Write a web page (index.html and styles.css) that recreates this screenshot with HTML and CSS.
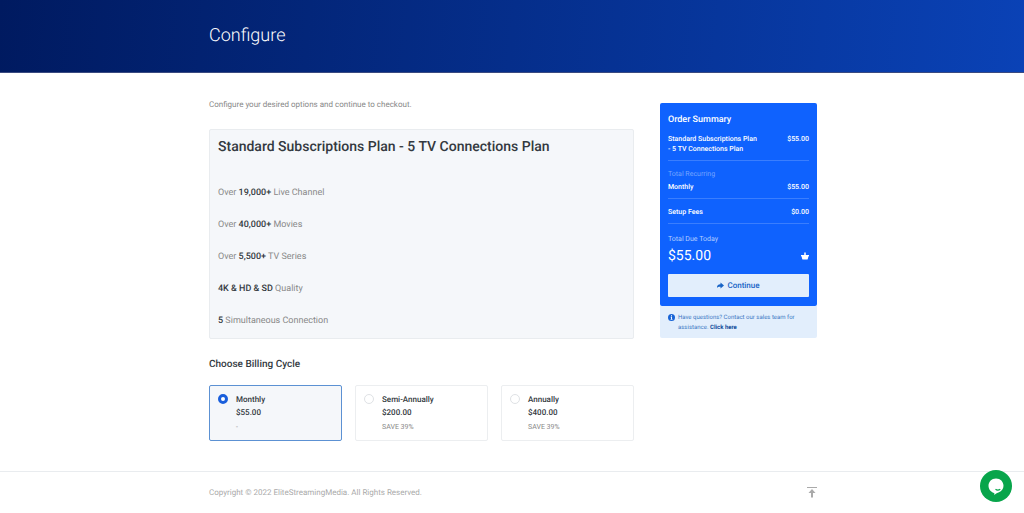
FILE: index.html
```html
<!DOCTYPE html>
<html lang="en">
<head>
<meta charset="utf-8">
<meta name="viewport" content="width=device-width, initial-scale=1">
<title>Configure</title>
<link rel="stylesheet" href="styles.css">
</head>
<body>
<header class="banner">
  <div class="container"><h1 class="banner-title">Configure</h1></div>
</header>
<main class="container layout">
  <form class="config" id="config">
    <p class="intro">Configure your desired options and continue to checkout.</p>
    <section class="product">
      <h2 class="product-title">Standard Subscriptions Plan - 5 TV Connections Plan</h2>
      <ul class="features">
        <li>Over <strong>19,000+</strong> Live Channel</li>
        <li>Over <strong>40,000+</strong> Movies</li>
        <li>Over <strong>5,500+</strong> TV Series</li>
        <li><strong>4K &amp; HD &amp; SD</strong> Quality</li>
        <li><strong>5</strong> Simultaneous Connection</li>
      </ul>
    </section>
    <h3 class="cycle-title">Choose Billing Cycle</h3>
    <div class="cycles">
      <label class="cycle">
        <input class="radio" type="radio" name="cycle" checked>
        <span class="cycle-text"><span>Monthly</span><span>$55.00</span><small class="save">-</small></span>
      </label>
      <label class="cycle">
        <input class="radio" type="radio" name="cycle">
        <span class="cycle-text"><span>Semi-Annually</span><span>$200.00</span><small class="save">SAVE 39%</small></span>
      </label>
      <label class="cycle">
        <input class="radio" type="radio" name="cycle">
        <span class="cycle-text"><span>Annually</span><span>$400.00</span><small class="save">SAVE 39%</small></span>
      </label>
    </div>
  </form>
  <aside class="sidebar">
    <section class="summary">
      <h2 class="summary-title">Order Summary</h2>
      <div class="row"><span class="row-name">Standard Subscriptions Plan - 5 TV Connections Plan</span><span>$55.00</span></div>
      <div class="group">
        <p class="muted">Total Recurring</p>
        <div class="row"><span>Monthly</span><span>$55.00</span></div>
      </div>
      <div class="group">
        <div class="row"><span>Setup Fees</span><span>$0.00</span></div>
      </div>
      <div class="group due">
        <p class="due-label">Total Due Today</p>
        <div class="total"><span>$55.00</span>
          <svg class="basket" viewBox="0 0 16 16" aria-hidden="true"><path d="M6.500 1h3v5H16v2.500h-1L13.500 14q-.3 1-1.300 1H3.800q-1 0-1.300-1L1 8.500H0V6h6.500z"/></svg>
        </div>
        <button class="continue" type="submit" form="config">
          <svg class="arrow" viewBox="0 0 16 16" aria-hidden="true"><path d="M8 1l8 7-8 7v-4H5Q2 11 0 13.500C0 8 2 5 8 5z"/></svg>
          Continue
        </button>
      </div>
    </section>
    <div class="help">
      <svg class="info" viewBox="0 0 16 16" aria-hidden="true"><circle cx="8" cy="8" r="8" fill="#1763d6"/><path d="M6.900 3h2.300v2.200H6.900zM6 6.500h3.200v4.700h1V13H6v-1.800h1V8.200H6z" fill="#fff"/></svg>
      <p>Have questions? Contact our sales team for assistance. <a class="help-link" href="#">Click here</a></p>
    </div>
  </aside>
</main>
<footer class="footer">
  <div class="container footer-inner">
    <p>Copyright © 2022 EliteStreamingMedia. All Rights Reserved.</p>
    <a class="top-link" href="#" aria-label="Back to top"><svg viewBox="0 0 10 11" width="10" height="11" aria-hidden="true"><path d="M0 0h10v1H0zM5 2L8.500 6H6v4.500H4V6H1.500z" fill="#aaa"/></svg></a>
  </div>
</footer>
<button class="chat" type="button" aria-label="Open chat">
  <svg viewBox="0 0 32 32" width="32" height="32" aria-hidden="true"><path d="M16 8.500c4.400 0 7.500 3.200 7.500 7.300 0 3.300-2 5.500-4.500 6.500-1.700.7-3 1.300-4.700 2.700v-1.900C11 22.300 8.500 19.500 8.500 15.800c0-4.100 3.100-7.300 7.500-7.300z" fill="#fff"/><path d="M15.500 19.200q2.200 1.700 4.800 0" fill="none" stroke="#08a54b" stroke-width="1.200"/></svg>
</button>
</body>
</html>
```
FILE: styles.css
```css
* { box-sizing: border-box; }
body {
  margin: 0;
  font: 8px/10px Roboto, "Liberation Sans", sans-serif;
  text-rendering: geometricPrecision;
  color: #888;
  background: #fff;
}
h1, h2, h3, p, ul { margin: 0; padding: 0; font-weight: 500; }
p, ul { font-weight: 400; }
ul { list-style: none; }
button { font: inherit; text-rendering: inherit; border: 0; cursor: pointer; }
.container { width: 100%; max-width: 640px; margin: 0 auto; padding: 0 15px 0 17px; }
.banner {
  padding: 24px 0;
  background: linear-gradient(95deg, #001a60, #0a42b6);
  border-bottom: 1px solid #3a4a80;
}
.banner-title { color: #fff; font-size: 18px; line-height: 24px; font-weight: 300; }
.layout {
  display: grid;
  grid-template-columns: minmax(0, 1fr) 157px;
  gap: 26px;
  align-items: start;
  padding-top: 28px;
  padding-bottom: 30px;
}
.sidebar { padding-top: 2px; }
.product {
  margin-top: 20px;
  padding: 7px 8px 11px;
  background: #f5f7fa;
  border: 1px solid #e9ecef;
  border-radius: 2px;
}
.intro { line-height: 8px; }
.product-title { color: #333940; font-size: 14px; line-height: 20px; }
.features { display: grid; gap: 20px; padding-top: 30px; font-size: 9px; line-height: 12px; }
strong { color: #333940; font-weight: 500; }
.cycle-title { margin-top: 20px; color: #333940; font-size: 10px; line-height: 12px; }
.cycles { display: grid; grid-template-columns: repeat(3, 1fr); gap: 13px; margin-top: 14px; }
.cycle {
  display: flex;
  gap: 8px;
  padding: 7px 8px 6px;
  border: 1px solid #eceef0;
  border-radius: 2px;
}
.cycle:has(:checked) { border-color: #5c91d3; background: #f5f7fa; }
.radio {
  appearance: none;
  flex: none;
  width: 10px;
  height: 10px;
  margin: 1px 0 0;
  border: 1px solid #dfe2e5;
  border-radius: 50%;
  background: #fff;
}
.radio:checked { border: 3px solid #1a5fdc; }
.cycle-text { display: grid; color: #333940; font-size: 8px; line-height: 13px; font-weight: 500; }
.save { margin-top: 2px; color: #888; font-size: 7px; font-weight: 400; }
.summary { padding: 11px 8px 9px; background: #0f62fe; color: #fff; border-radius: 2px; font-size: 7px; font-weight: 500; }
.summary-title { font-size: 9px; line-height: 12px; margin-bottom: 8px; }
.row { display: flex; justify-content: space-between; gap: 24px; }
.row-name { max-width: 92px; }
.group { margin-top: 6px; padding-top: 8px; border-top: 1px solid #3a7efe; }
.muted { color: #75a5ff; margin-bottom: 3px; }
.due { padding-top: 10px; }
.due-label { color: #b5cfff; }
.total { display: flex; justify-content: space-between; align-items: center; font-size: 14px; line-height: 20px; font-weight: 400; margin: 2px 0 8px; }
.basket { width: 8px; height: 8px; fill: #fff; }
.continue {
  display: flex;
  justify-content: center;
  align-items: center;
  gap: 3px;
  width: 100%;
  padding: 6px;
  color: #1763c6;
  background: #e2eefc;
  border-radius: 1px;
  font-size: 8px;
  line-height: 11px;
  font-weight: 500;
}
.arrow { width: 7px; height: 7px; fill: currentColor; }
.help { display: flex; gap: 3px; padding: 7px 8px 5px; color: #3c78c4; background: #e2eefc; font-size: 6px; border-radius: 0 0 2px 2px; }
.info { flex: none; width: 7px; height: 7px; margin-top: 1px; }
.help-link { color: #124b9a; font-weight: 700; text-decoration: none; }
.footer { border-top: 1px solid #e9ecef; color: #aaa; }
.footer-inner { display: flex; justify-content: space-between; align-items: center; padding-top: 15px; padding-bottom: 15px; }
.top-link { display: flex; }
.chat { position: fixed; right: 12px; bottom: 11px; width: 32px; height: 32px; padding: 0; border-radius: 50%; background: #08a54b; }
.chat svg { display: block; }
```
